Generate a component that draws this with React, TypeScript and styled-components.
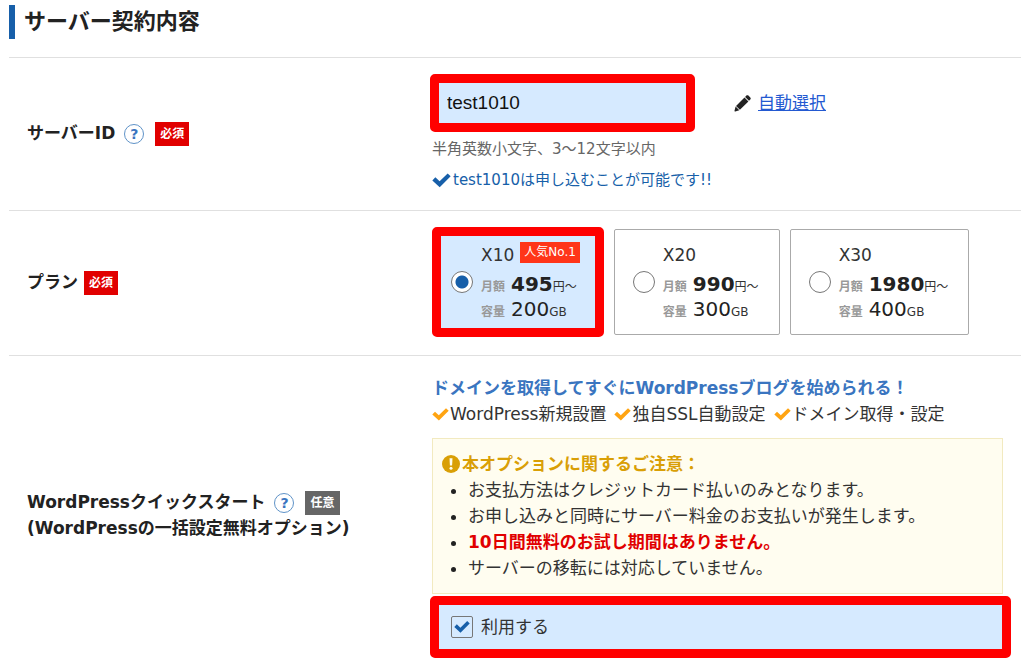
import React, { useState } from "react";
import styled, { createGlobalStyle, css } from "styled-components";

const color = {
  text: "#222",
  body: "#333",
  muted: "#666",
  faint: "#999",
  blue: "#175fa9",
  lightBlue: "#3a75c0",
  link: "#2359d1",
  highlight: "#d6eaff",
  mark: "#ff0000",
  required: "#e10000",
  optional: "#666",
  line: "#e0e0e0",
  orange: "#ffa412",
  caution: "#d99f06",
};

const GlobalStyle = createGlobalStyle`
  *, *::before, *::after { box-sizing: border-box; }
  body {
    margin: 0;
    background: #fff;
    color: ${color.body};
    font-family: "DejaVu Sans", "Noto Sans CJK JP", sans-serif;
    font-size: 17px;
    line-height: 26px;
  }
`;

const Page = styled.main`
  padding: 5px 3px 0 9px;
`;

const Heading = styled.h1`
  margin: 0 0 18px;
  padding-left: 9px;
  border-left: 6px solid ${color.blue};
  color: ${color.text};
  font-size: 22px;
  line-height: 34px;
`;

const Row = styled.section`
  display: grid;
  grid-template-columns: 405px minmax(0, 1fr);
  align-items: center;
  padding: 16px 18px 18px;
  border-top: 1px solid ${color.line};
`;

const RowLabel = styled.h2`
  margin: 0;
  color: ${color.text};
  font-size: 17px;
  line-height: 26px;
`;

const LabelLine = styled.span`
  display: flex;
  align-items: center;
`;

const Help = styled.button`
  display: grid;
  place-items: center;
  width: 20px;
  height: 20px;
  margin: 2px 5px 0 9px;
  padding: 0;
  border: 1px solid #5f93c8;
  border-radius: 50%;
  background: #fff;
  color: ${color.lightBlue};
  font: bold 14px/18px "DejaVu Sans", sans-serif;
`;

const Tag = styled.span<{ $optional?: boolean }>`
  margin: 2px 0 0 6px;
  padding: 0 5px;
  background: ${(p) => (p.$optional ? color.optional : color.required)};
  color: #fff;
  font-size: 12px;
  line-height: 24px;
`;

const marked = css`
  border: 9px solid ${color.mark};
  border-radius: 5px;
  background: ${color.highlight};
`;

const InputLine = styled.div`
  display: flex;
  align-items: center;
  margin-left: -2px;
`;

const IdInput = styled.input`
  ${marked}
  width: 265px;
  height: 58px;
  margin: 0 39px 0 0;
  padding: 0 8px;
  color: #111;
  font: 19px "Liberation Sans", Arial, sans-serif;
  outline: none;
`;

const AutoLink = styled.a`
  margin-left: 7px;
  color: ${color.link};
`;

const Hint = styled.p`
  margin: 6px 0 0;
  color: ${color.muted};
  font-size: 15px;
  line-height: 22px;
`;

const Available = styled.p`
  display: flex;
  align-items: center;
  gap: 2px;
  margin: 9px 0 1px;
  color: ${color.blue};
  font-size: 15px;
  line-height: 22px;
`;

const Plans = styled.div`
  display: flex;
  align-items: center;
  gap: 10px;
`;

const PlanCard = styled.label<{ $selected: boolean }>`
  display: flex;
  align-items: center;
  gap: 8px;
  height: 106px;
  padding: 0 20px 0 18px;
  border: 1px solid #aaa;
  border-radius: 2px;
  white-space: nowrap;
  ${(p) =>
    p.$selected &&
    css`
      ${marked}
      height: 110px;
      padding: 0 15px 0 10px;
    `}
`;

const Radio = styled.input`
  appearance: none;
  flex: none;
  width: 22px;
  height: 22px;
  margin: 0;
  border: 1px solid #777;
  border-radius: 50%;
  background: #fff;
  &:checked {
    background: radial-gradient(circle, ${color.blue} 6px, #fff 7px);
  }
`;

const PlanText = styled.span`
  display: block;
  padding-bottom: 2px;
`;

const PlanName = styled.span`
  display: flex;
  align-items: center;
  gap: 6px;
  margin-bottom: 2px;
  line-height: 30px;
`;

const Popular = styled.span`
  margin-bottom: 6px;
  padding: 0 4px;
  background: #ff3519;
  color: #fff;
  font-size: 12px;
  line-height: 21px;
`;

const Spec = styled.span`
  display: flex;
  align-items: baseline;
  font-size: 12px;
  line-height: 14px;
`;

const SpecName = styled.span`
  margin-right: 6px;
  color: ${color.faint};
  font-weight: bold;
`;

const Amount = styled.span<{ $bold?: boolean }>`
  color: ${color.text};
  font-size: 20px;
  font-weight: ${(p) => (p.$bold ? "bold" : "normal")};
  line-height: 25px;
`;

const Lead = styled.p`
  margin: 3px 0 0;
  color: ${color.lightBlue};
  font-weight: bold;
`;

const Features = styled.ul`
  display: flex;
  flex-wrap: wrap;
  gap: 0 8px;
  margin: 0;
  padding: 0;
  list-style: none;
`;

const Feature = styled.li`
  display: flex;
  align-items: center;
  gap: 1px;
`;

const Notice = styled.div`
  margin-top: 11px;
  padding: 12px 9px;
  border: 1px solid #f2eac0;
  background: #fffdf0;
`;

const NoticeTitle = styled.p`
  display: flex;
  align-items: center;
  gap: 2px;
  margin: 0;
  color: ${color.caution};
  font-weight: bold;
`;

const NoticeList = styled.ul`
  margin: 0;
  padding-left: 26px;
`;

const NoticeItem = styled.li<{ $alert?: boolean }>`
  ${(p) =>
    p.$alert &&
    css`
      color: ${color.required};
      font-weight: bold;
    `}
  &::marker {
    color: ${color.text};
  }
`;

const UseOption = styled.label`
  ${marked}
  display: flex;
  align-items: center;
  gap: 8px;
  height: 62px;
  margin: 2px -8px 0 -2px;
  padding: 0 12px;
`;

const CheckBoxWrap = styled.span`
  display: grid;
  place-items: center;
  > * {
    grid-area: 1 / 1;
  }
`;

const CheckBox = styled.input`
  appearance: none;
  width: 22px;
  height: 22px;
  margin: 0;
  border: 1px solid #777;
  border-radius: 2px;
  background: ${color.highlight};
  & + svg {
    visibility: hidden;
    pointer-events: none;
  }
  &:checked + svg {
    visibility: visible;
  }
`;

const Icon = styled.svg`
  display: block;
  flex: none;
`;

const Check = ({ fill, size = 17 }: { fill: string; size?: number }) => (
  <Icon width={size} height={size} viewBox="0 0 17 17" fill={fill} aria-hidden="true">
    <path d="M0.3 8.4 3 5.7 6.8 9.2 14 2.2 16.7 4.8 6.9 14.6z" />
  </Icon>
);

const Pencil = () => (
  <Icon width="17" height="17" viewBox="0 0 17 17" fill={color.text} aria-hidden="true">
    <path d="M12.4.6c.6-.6 1.4-.6 2 0l1.9 1.9c.6.6.6 1.4 0 2l-1.3 1.3-3.9-3.9zM10.5 2.5l3.9 3.9-8.5 8.3L2 10.9zM1.6 11.6l3.7 3.7-4 1.2c-.6.2-1-.2-.8-.8z" />
  </Icon>
);

const Exclamation = () => (
  <Icon width="18" height="18" viewBox="0 0 18 18" aria-hidden="true">
    <circle cx="9" cy="9" r="9" fill={color.caution} />
    <path d="M7.5 3.2h3L10.1 10.6H7.9z" fill="#fffdf0" />
    <circle cx="9" cy="13.3" r="1.5" fill="#fffdf0" />
  </Icon>
);

const plans = [
  { name: "X10", price: "495", size: "200", popular: true },
  { name: "X20", price: "990", size: "300" },
  { name: "X30", price: "1980", size: "400" },
];

const notices = [
  { text: "お支払方法はクレジットカード払いのみとなります。" },
  { text: "お申し込みと同時にサーバー料金のお支払いが発生します。" },
  { text: "10日間無料のお試し期間はありません。", alert: true },
  { text: "サーバーの移転には対応していません。" },
];

export default function App() {
  const [serverId, setServerId] = useState("test1010");
  const [plan, setPlan] = useState("X10");
  const [quickStart, setQuickStart] = useState(true);

  return (
    <Page lang="ja">
      <GlobalStyle />
      <Heading>サーバー契約内容</Heading>

      <Row>
        <RowLabel>
          <LabelLine>
            <label htmlFor="server-id">サーバーID</label>
            <Help type="button">?</Help>
            <Tag>必須</Tag>
          </LabelLine>
        </RowLabel>
        <div>
          <InputLine>
            <IdInput
              id="server-id"
              type="text"
              value={serverId}
              onChange={(e) => setServerId(e.target.value)}
            />
            <Pencil />
            <AutoLink href="#auto">自動選択</AutoLink>
          </InputLine>
          <Hint>半角英数小文字、3〜12文字以内</Hint>
          <Available>
            <Check fill={color.blue} size={19} />
            test1010は申し込むことが可能です!!
          </Available>
        </div>
      </Row>

      <Row>
        <RowLabel id="plan-label">
          <LabelLine>
            プラン<Tag>必須</Tag>
          </LabelLine>
        </RowLabel>
        <Plans role="radiogroup" aria-labelledby="plan-label">
          {plans.map((p) => (
            <PlanCard key={p.name} $selected={plan === p.name}>
              <Radio
                type="radio"
                name="plan"
                value={p.name}
                checked={plan === p.name}
                onChange={() => setPlan(p.name)}
              />
              <PlanText>
                <PlanName>
                  {p.name}
                  {p.popular && <Popular>人気No.1</Popular>}
                </PlanName>
                <Spec>
                  <SpecName>月額</SpecName>
                  <Amount $bold>{p.price}</Amount>円～
                </Spec>
                <Spec>
                  <SpecName>容量</SpecName>
                  <Amount>{p.size}</Amount>GB
                </Spec>
              </PlanText>
            </PlanCard>
          ))}
        </Plans>
      </Row>

      <Row>
        <RowLabel>
          <LabelLine>
            WordPressクイックスタート
            <Help type="button">?</Help>
            <Tag $optional>任意</Tag>
          </LabelLine>
          (WordPressの一括設定無料オプション)
        </RowLabel>
        <div>
          <Lead>ドメインを取得してすぐにWordPressブログを始められる！</Lead>
          <Features>
            {["WordPress新規設置", "独自SSL自動設定", "ドメイン取得・設定"].map((f) => (
              <Feature key={f}>
                <Check fill={color.orange} />
                {f}
              </Feature>
            ))}
          </Features>
          <Notice>
            <NoticeTitle>
              <Exclamation />
              本オプションに関するご注意：
            </NoticeTitle>
            <NoticeList>
              {notices.map((n) => (
                <NoticeItem key={n.text} $alert={n.alert}>
                  {n.text}
                </NoticeItem>
              ))}
            </NoticeList>
          </Notice>
          <UseOption>
            <CheckBoxWrap>
              <CheckBox
                type="checkbox"
                checked={quickStart}
                onChange={(e) => setQuickStart(e.target.checked)}
              />
              <Check fill={color.blue} size={16} />
            </CheckBoxWrap>
            利用する
          </UseOption>
        </div>
      </Row>
    </Page>
  );
}
